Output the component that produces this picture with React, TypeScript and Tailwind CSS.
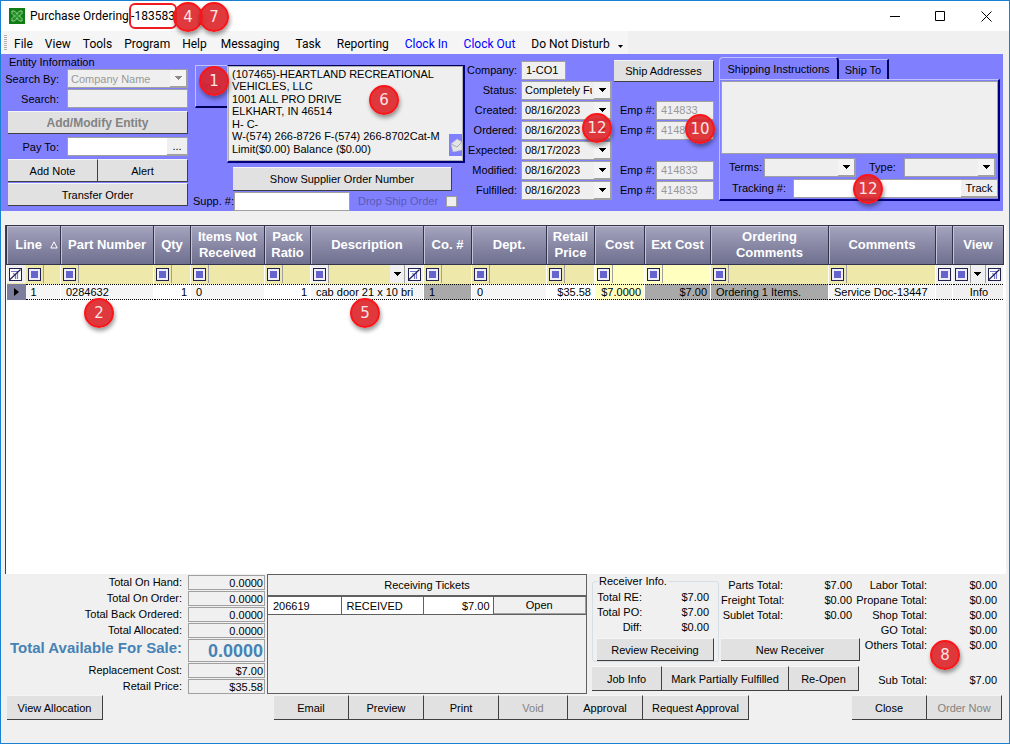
import { useId } from "react";
import type { ReactNode } from "react";
import clsx from "clsx";

const DATES = [
  { label: "Created:", value: "08/16/2023" },
  { label: "Ordered:", value: "08/16/2023" },
  { label: "Expected:", value: "08/17/2023" },
  { label: "Modified:", value: "08/16/2023" },
  { label: "Fulfilled:", value: "08/16/2023" },
];

const ADDRESS = [
  "(107465)-HEARTLAND RECREATIONAL",
  "VEHICLES, LLC",
  "1001 ALL PRO DRIVE",
  "ELKHART, IN 46514",
  "H- C-",
  "W-(574) 266-8726 F-(574) 266-8702Cat-M",
  "Limit($0.00) Balance ($0.00)",
];

const FIELD = "border border-[#a0a0a0] bg-[#efefef] outline-none";

interface BadgeProps {
  children: ReactNode;
  className: string;
}

function Badge({ children, className }: BadgeProps) {
  return (
    <span
      className={clsx(
        "pointer-events-none absolute z-10 flex h-[30px] w-[30px] items-center justify-center rounded-full border-2 border-[#fb1518] bg-[#dc2228]/90 font-['DejaVu_Sans'] text-[15px] text-[#fbe4e4] shadow-[1px_3px_4px_rgba(0,0,0,0.4)]",
        className,
      )}
    >
      {children}
    </span>
  );
}

interface ButtonProps {
  children: ReactNode;
  className?: string;
  disabled?: boolean;
}

function Button({ children, className, disabled }: ButtonProps) {
  return (
    <button
      type="button"
      disabled={disabled}
      className={clsx(
        "flex shrink-0 items-center justify-center border-t border-r border-b border-t-[#f4f4f4] border-r-[#404040] border-b-[#404040] bg-[#e1e1e1] whitespace-nowrap disabled:text-[#838383]",
        className,
      )}
    >
      {children}
    </button>
  );
}

function Arrow({ muted }: { muted?: boolean }) {
  return (
    <svg
      viewBox="0 0 7 4"
      className={clsx("h-1 w-[7px] shrink-0", muted ? "text-[#8a8a8a]" : "text-black")}
      fill="currentColor"
      shapeRendering="crispEdges"
    >
      <path d="M0 0h7v1H0zM1 1h5v1H1zM2 2h3v1H2zM3 3h1v1H3z" />
    </svg>
  );
}

interface SelectFieldProps {
  id?: string;
  value?: string;
  label?: string;
  className?: string;
  disabled?: boolean;
}

function SelectField({ id, value = "", label, className, disabled }: SelectFieldProps) {
  return (
    <span className={clsx("relative flex", className)}>
      <select
        id={id}
        aria-label={label}
        disabled={disabled}
        className={clsx(
          FIELD,
          "w-full appearance-none border-r-2 pr-[18px] pl-[3px] text-black disabled:text-[#999] disabled:opacity-100",
        )}
      >
        <option>{value}</option>
      </select>
      <span className="pointer-events-none absolute inset-y-px right-0.5 flex w-4 items-center justify-center border-b border-[#a0a0a0] bg-[#f4f4f4]">
        <Arrow muted={disabled} />
      </span>
    </span>
  );
}

function FilterIcon() {
  return (
    <span className="flex h-[13px] w-[13px] shrink-0 items-center justify-center border border-[#20204e] bg-[#eeeefa]">
      <span className="h-[7px] w-[7px] bg-[#6464cc]" />
    </span>
  );
}

function ClearFilterIcon() {
  return (
    <svg viewBox="0 0 13 13" className="h-[13px] w-[13px] shrink-0" fill="none">
      <rect x="0.5" y="0.5" width="12" height="12" fill="#fff" stroke="#20204e" />
      <path d="M2 3.500h8M4 5.500l2 1M6.500 7v4M8.500 5v6" stroke="#7474d4" strokeWidth="1.2" />
      <path d="M1 11.500 11.500 1.500" stroke="#20204e" strokeWidth="1.2" />
    </svg>
  );
}

function TitleBar() {
  return (
    <header className="relative flex h-[30px] items-center bg-white pl-2 font-[Roboto,sans-serif] text-[12px]">
      <svg viewBox="0 0 16 16" className="h-4 w-4" fill="none">
        <rect width="16" height="16" fill="#0f7d12" />
        <path d="M3 3h2.500L13 10.500V13h-2.500L3 5.500zM13 3h-2.500L3 10.500V13h2.500L13 5.500z" stroke="#9fd69f" />
        <path d="m4.500 4.500 7 7M11.500 4.500l-7 7" stroke="#2f9c33" strokeWidth="1.4" />
      </svg>
      <h1 className="ml-[5px] w-[99px] whitespace-nowrap">Purchase Ordering</h1>
      <span className="flex h-[26px] w-12 items-center justify-center rounded-md border-2 border-[#ee1c20] whitespace-nowrap">
        -183583
      </span>
      <Badge className="top-[1px] left-[172px]">4</Badge>
      <Badge className="top-[1px] left-[198px]">7</Badge>
      <div className="ml-auto flex">
        <button type="button" aria-label="Minimize" className="flex h-7 w-[45px] items-center justify-center">
          <svg viewBox="0 0 11 11" className="h-[11px] w-[11px]" stroke="#000" fill="none">
            <path d="M0 5.500h10" />
          </svg>
        </button>
        <button type="button" aria-label="Maximize" className="flex h-7 w-[45px] items-center justify-center">
          <svg viewBox="0 0 11 11" className="h-[11px] w-[11px]" stroke="#000" fill="none">
            <path d="M.5.5h9v9h-9z" />
          </svg>
        </button>
        <button type="button" aria-label="Close window" className="flex h-7 w-[46px] items-center justify-center">
          <svg viewBox="0 0 11 11" className="h-[11px] w-[11px]" stroke="#000" fill="none">
            <path d="m.5.5 10 10M10.500.5l-10 10" />
          </svg>
        </button>
      </div>
    </header>
  );
}

function MenuBar() {
  return (
    <nav className="flex h-[23px] items-center bg-[#f0f0f0] font-[Roboto,sans-serif] text-[12px] whitespace-nowrap">
      <div className="flex h-full w-[627px] items-center bg-[#f5f5f5] pl-[3px]">
        <span className="mr-[7px] h-4 w-[3px] shrink-0 bg-[repeating-linear-gradient(#b0b0b0_0_1px,transparent_1px_2px)]" />
        <div className="flex gap-3 pt-0.5">
          <button type="button">File</button>
          <button type="button">View</button>
          <button type="button">Tools</button>
          <button type="button">Program</button>
          <button type="button">Help</button>
        </div>
        <div className="ml-3.5 flex gap-4 pt-0.5">
          <button type="button">Messaging</button>
          <button type="button">Task</button>
          <button type="button">Reporting</button>
          <button type="button" className="text-[#0000ff]">Clock In</button>
          <button type="button" className="text-[#0000ff]">Clock Out</button>
          <button type="button">Do Not Disturb</button>
        </div>
        <span className="mt-2 ml-2">
          <svg viewBox="0 0 5 3" className="h-[3px] w-[5px]">
            <path d="M0 0h5L2.500 3z" />
          </svg>
        </span>
      </div>
    </nav>
  );
}

function EntityPanel() {
  return (
    <div className="flex w-[187px] shrink-0 flex-col pt-px pl-[7px]">
      <h2 className="h-[14px] pl-px leading-[14px]">Entity Information</h2>
      <div className="grid grid-cols-[51px_1fr] items-center gap-x-2 gap-y-px">
        <label htmlFor="search-by" className="-ml-2 text-right whitespace-nowrap">Search By:</label>
        <SelectField id="search-by" value="Company Name" disabled className="h-[19px]" />
        <label htmlFor="search" className="text-right">Search:</label>
        <input id="search" className={clsx(FIELD, "h-[19px] w-full")} />
      </div>
      <Button disabled className="mt-[3px] h-[23px] text-[12px] font-bold">Add/Modify Entity</Button>
      <div className="mt-[3px] grid grid-cols-[51px_1fr] items-center gap-x-2">
        <label htmlFor="pay-to" className="text-right">Pay To:</label>
        <span className="flex h-[19px] border border-[#a0a0a0] bg-white">
          <input id="pay-to" className="w-full min-w-0 bg-transparent outline-none" />
          <button type="button" aria-label="Browse payees" className="w-5 shrink-0 border-b border-[#a0a0a0] bg-[#efefef] leading-3">
            ...
          </button>
        </span>
      </div>
      <div className="mt-[3px] grid grid-cols-2">
        <Button className="h-[23px]">Add Note</Button>
        <Button className="h-[23px]">Alert</Button>
      </div>
      <Button className="mt-px h-[23px]">Transfer Order</Button>
    </div>
  );
}

function SupplierPanel() {
  return (
    <div className="relative ml-[7px] flex w-[270px] shrink-0 flex-col pt-[11px]">
      <div className="flex items-start">
        <button
          type="button"
          className="h-[43px] w-8 shrink-0 border-t border-b-2 border-l border-t-[#c0c0ff] border-b-[#00005a] border-l-[#c0c0ff] text-[#26267a]"
        >
          Info
        </button>
        <div className="min-w-0 flex-1 border-t border-r-2 border-b-2 border-l border-t-[#00005a] border-r-[#00007e] border-b-[#00007e] border-l-[#c0c0ff]">
          <div className="relative h-[95px] border border-[#b0b0b0] bg-[#efefef] pt-px pl-[3px] whitespace-nowrap">
            {ADDRESS.map((line) => (
              <p key={line} className="odd:leading-3 even:leading-[13px]">{line}</p>
            ))}
            <span className="absolute right-0 bottom-1 flex h-[22px] w-[13px] items-center bg-[#8080ff]">
              <svg viewBox="0 0 13 14" className="h-[14px] w-[13px]">
                <path d="M2 6 8 1l5 3v8L4 14z" fill="#e4e4e4" stroke="#b8b8c4" strokeWidth="0.7" />
                <path d="m2 6 6 3 5-5" fill="none" stroke="#a8a8b4" />
              </svg>
            </span>
          </div>
        </div>
      </div>
      <Button className="mt-1 ml-[38px] h-6 w-[219px]">Show Supplier Order Number</Button>
      <div className="flex h-5 items-center">
        <label htmlFor="supplier" className="-ml-0.5 w-[41px] whitespace-nowrap">Supp. #:</label>
        <input id="supplier" className="h-[19px] w-[116px] border border-[#a0a0a0] bg-white outline-none" />
        <label htmlFor="drop-ship" className="ml-2 whitespace-nowrap text-[#5a5ab4]">Drop Ship Order</label>
        <input
          id="drop-ship"
          type="checkbox"
          disabled
          className="ml-2 h-[11px] w-[11px] appearance-none border border-[#a0a0a0] bg-[#efefef]"
        />
      </div>
      <Badge className="top-[12px] left-[4px]">1</Badge>
      <Badge className="top-[31px] left-[174px]">6</Badge>
    </div>
  );
}

function DatesPanel() {
  const uid = useId();
  return (
    <div className="relative ml-0.5 flex shrink-0 gap-0.5 pt-1.5">
      <div className="grid w-[145px] auto-rows-[20px] grid-cols-[50px_91px] items-center gap-x-1">
        <label htmlFor="company" className="text-right">Company:</label>
        <input id="company" defaultValue="1-CO1" className={clsx(FIELD, "h-[19px] w-[45px] pl-1")} />
        <label htmlFor="status" className="text-right">Status:</label>
        <SelectField id="status" value="Completely Fulfilled" className="h-[19px]" />
        {DATES.map(({ label, value }) => (
          <div key={label} className="contents">
            <label htmlFor={uid + label} className="text-right">{label}</label>
            <SelectField id={uid + label} value={value} className="h-[19px]" />
          </div>
        ))}
      </div>
      <div className="w-[100px]">
        <Button className="h-[22px] w-full">Ship Addresses</Button>
        <div className="mt-[18px] grid auto-rows-[20px] grid-cols-[36px_58px] items-center pl-1.5">
          {DATES.map(({ label }) =>
            label === "Expected:" ? (
              <span key={label} className="col-span-2" />
            ) : (
              <div key={label} className="contents">
                <label htmlFor={uid + "emp" + label}>Emp #:</label>
                <input
                  id={uid + "emp" + label}
                  defaultValue="414833"
                  disabled
                  className={clsx(FIELD, "h-[19px] w-full pl-1 text-[#999]")}
                />
              </div>
            ),
          )}
        </div>
      </div>
      <Badge className="top-[59px] left-[115px]">12</Badge>
      <Badge className="top-[60px] left-[218px]">10</Badge>
    </div>
  );
}

function ShippingPanel() {
  return (
    <div className="relative mr-[3px] ml-[5px] min-w-0 flex-1 pt-[3px]">
      <div role="tablist" className="flex items-end">
        <button
          type="button"
          role="tab"
          aria-selected="true"
          className="h-[22px] w-[120px] rounded-t-sm border-t border-r-2 border-l border-t-[#c0c0ff] border-r-[#00005a] border-l-[#c0c0ff] whitespace-nowrap"
        >
          Shipping Instructions
        </button>
        <button
          type="button"
          role="tab"
          aria-selected="false"
          className="h-5 w-[50px] border-t border-r-2 border-t-[#c0c0ff] border-r-[#00005a]"
        >
          Ship To
        </button>
      </div>
      <div className="border-t border-r-2 border-b-2 border-l border-t-[#c0c0ff] border-r-[#00007e] border-b-[#00007e] border-l-[#c0c0ff] pb-px pl-px">
        <textarea
          aria-label="Shipping Instructions"
          className={clsx(FIELD, "mt-px block h-[73px] w-full resize-none")}
        />
        <div className="mt-[3px] flex h-5 items-center pr-0.5">
          <label htmlFor="terms" className="w-[43px] pl-2">Terms:</label>
          <SelectField id="terms" className="h-[19px] w-[92px]" />
          <label htmlFor="type" className="ml-[13px] w-[35px]">Type:</label>
          <SelectField id="type" className="h-[19px] flex-1" />
        </div>
        <div className="mt-px flex h-5 items-center">
          <label htmlFor="tracking" className="w-[72px] shrink-0 pl-[11px] whitespace-nowrap">Tracking #:</label>
          <span className="flex h-[19px] flex-1 border border-[#a0a0a0] bg-white">
            <input id="tracking" className="w-full min-w-0 bg-transparent outline-none" />
            <button type="button" className="w-9 shrink-0 border-b border-[#a0a0a0] bg-[#efefef]">Track</button>
          </span>
        </div>
      </div>
      <Badge className="top-[120px] left-[134px]">12</Badge>
    </div>
  );
}

interface Column {
  title: string;
  width: string;
  filter?: string;
  value: string;
  cell?: string;
  arrow?: boolean;
  clear?: boolean;
  sorted?: boolean;
}

const COLUMNS: Column[] = [
  { title: "Line", width: "w-[54px]", value: "1", sorted: true },
  { title: "Part Number", width: "w-[93px]", value: "0284632" },
  { title: "Qty", width: "w-[37px]", value: "1", cell: "text-right" },
  { title: "Items Not Received", width: "w-[74px]", value: "0" },
  { title: "Pack Ratio", width: "w-[46px]", value: "1", cell: "text-right" },
  { title: "Description", width: "w-[113px]", value: "cab door 21 x 10 bri", arrow: true, clear: true },
  { title: "Co. #", width: "w-[48px]", value: "1", cell: "bg-[#a9a9a9]" },
  { title: "Dept.", width: "w-[75px]", value: "0" },
  { title: "Retail Price", width: "w-[48px]", value: "$35.58", cell: "text-right" },
  { title: "Cost", width: "w-[50px]", value: "$7.0000", filter: "bg-[#ffffc0]", cell: "bg-[#ffffc0] text-right" },
  { title: "Ext Cost", width: "w-[66px]", value: "$7.00", filter: "bg-[#ffffc0]", cell: "bg-[#a9a9a9] text-right" },
  { title: "Ordering Comments", width: "w-[118px]", value: "Ordering 1 Items.", cell: "bg-[#a9a9a9]" },
  { title: "Comments", width: "w-auto", value: "Service Doc-13447" },
  { title: "", width: "w-[17px]", value: "", filter: "bg-[#f0f0f0]", cell: "bg-[#f0f0f0]" },
  { title: "View", width: "w-[51px]", value: "Info", filter: "bg-[#f0f0f0]", cell: "bg-[#f0f0f0] text-center", arrow: true, clear: true },
];

function OrderGrid() {
  return (
    <main className="relative mt-[14px] mr-[3px] ml-1 flex-1 border-l border-[#404040] bg-white pr-0.5">
      <table className="w-full table-fixed border-collapse">
        <colgroup>
          {COLUMNS.map((col) => (
            <col key={col.title} className={col.width} />
          ))}
        </colgroup>
        <thead>
          <tr className="h-[39px]">
            {COLUMNS.map((col) => (
              <th
                key={col.title}
                scope="col"
                className="border border-[#33334a] bg-linear-to-b from-[#a4a4be] to-[#6e6e8e] p-0 text-[13px] leading-4 font-bold text-white shadow-[inset_1px_1px_0_#c4c4d6]"
              >
                {col.sorted ? (
                  <span className="flex items-center justify-end gap-2 pr-0.5">
                    {col.title}
                    <svg viewBox="0 0 8 8" className="h-2 w-2" fill="none" stroke="#fff">
                      <path d="M4 .8.800 7h6.400z" />
                    </svg>
                  </span>
                ) : (
                  col.title
                )}
              </th>
            ))}
          </tr>
        </thead>
        <tbody>
          <tr className="h-[19px]">
            {COLUMNS.map((col) => (
              <td key={col.title} className={clsx("border-r border-white p-0", col.filter ?? "bg-[#eee8aa]")}>
                <div className="flex h-[18px] items-center">
                  {col.sorted && (
                    <span className="flex h-full w-[19px] shrink-0 items-center bg-[#f0f0f0] pl-0.5">
                      <ClearFilterIcon />
                    </span>
                  )}
                  <span
                    className={clsx(
                      "flex h-full shrink-0 items-center justify-center",
                      col.title ? "w-[18px] border-r border-[#a0a0a0]" : "w-4",
                      col.arrow && "bg-[#f0f0f0]",
                    )}
                  >
                    <FilterIcon />
                  </span>
                  {col.arrow && (
                    <span className="ml-auto flex h-full w-[15px] items-center justify-center border-r border-[#a0a0a0] bg-[#f0f0f0]">
                      <Arrow />
                    </span>
                  )}
                  {col.clear && (
                    <span className="flex h-full w-[18px] items-center justify-center bg-[#f0f0f0]">
                      <ClearFilterIcon />
                    </span>
                  )}
                </div>
              </td>
            ))}
          </tr>
          <tr className="h-4">
            {COLUMNS.map((col) => (
              <td key={col.title} className={clsx("border-r border-white p-0 leading-3 whitespace-nowrap", col.cell ?? "bg-[#f5f5f5]")}>
                <div className="flex h-4">
                  {col.sorted && (
                    <span className="flex w-[19px] shrink-0 items-center justify-center bg-[#7c7c9c]">
                      <svg viewBox="0 0 5 8" className="h-2 w-[5px]">
                        <path d="M0 0v8l5-4z" />
                      </svg>
                    </span>
                  )}
                  <span className="h-4 flex-1 overflow-hidden border-y border-dotted border-black pr-[3px] pl-[5px] leading-[14px]">
                    {col.title === "View" ? <button type="button">{col.value}</button> : col.value}
                  </span>
                </div>
              </td>
            ))}
          </tr>
        </tbody>
      </table>
      <Badge className="top-[73px] left-[78px]">2</Badge>
      <Badge className="top-[73px] left-[344px]">5</Badge>
    </main>
  );
}

const STOCK = [
  ["Total On Hand:", "0.0000"],
  ["Total On Order:", "0.0000"],
  ["Total Back Ordered:", "0.0000"],
  ["Total Allocated:", "0.0000"],
  ["Total Available For Sale:", "0.0000"],
  ["Replacement Cost:", "$7.00"],
  ["Retail Price:", "$35.58"],
];

function StockTotals() {
  return (
    <dl className="w-[260px] shrink-0 pt-px">
      {STOCK.map(([label, value]) => {
        const big = label.includes("Available");
        return (
          <div key={label} className={clsx("flex", big ? "h-6 font-bold text-[#4682b4]" : "h-4")}>
            <dt className={clsx("w-[183px] shrink-0 pr-1.5 text-right whitespace-nowrap", big ? "text-[15px] leading-[18px]" : "leading-[14px]")}>
              {label}
            </dt>
            <dd
              className={clsx(
                "flex-1 border border-[#a0a0a0] pr-px text-right",
                big ? "h-[23px] text-[18px] leading-[22px]" : "h-[15px] leading-[14px]",
              )}
            >
              {value}
            </dd>
          </div>
        );
      })}
    </dl>
  );
}

function Tickets() {
  return (
    <section className="ml-0.5 h-[120px] w-[320px] shrink-0 border border-[#606060]">
      <table className="w-full table-fixed border-collapse">
        <caption className="h-5 leading-5">Receiving Tickets</caption>
        <tbody>
          <tr className="h-[18px] border-t-2 border-b border-[#606060]">
            <td className="w-[73px] border-r border-[#606060] bg-white p-0 pl-[5px]">206619</td>
            <td className="w-[82px] border-r border-[#606060] bg-white p-0 pl-[5px]">RECEIVED</td>
            <td className="w-[70px] border-r border-[#606060] bg-white p-0 pr-[3px] text-right">$7.00</td>
            <td className="p-0">
              <button type="button" className="block h-[17px] w-full border-r border-b border-[#a0a0a0]">Open</button>
            </td>
          </tr>
        </tbody>
      </table>
    </section>
  );
}

interface AmountsProps {
  rows: string[][];
  className: string;
}

function Amounts({ rows, className }: AmountsProps) {
  return (
    <dl className={clsx("grid auto-rows-[15px] items-center text-right whitespace-nowrap", className)}>
      {rows.map(([label, value]) => (
        <div key={label} className="contents">
          <dt>{label}</dt>
          <dd>{value}</dd>
        </div>
      ))}
    </dl>
  );
}

function Footer() {
  return (
    <footer className="relative pl-1">
      <div className="flex">
        <StockTotals />
        <Tickets />
        {/* the button rows reach 4px past this column, under the totals beside it */}
        <div className="ml-[5px] w-[264px] shrink-0">
          <div className="flex">
            <fieldset className="h-[88px] w-[126px] shrink-0 rounded-[3px] border border-[#d5dfe5] px-1">
              <legend className="ml-px px-px leading-[14px]">Receiver Info.</legend>
              <Amounts
                className="grid-cols-[45px_1fr] pt-px pr-[5px]"
                rows={[["Total RE:", "$7.00"], ["Total PO:", "$7.00"], ["Diff:", "$0.00"]]}
              />
              <Button className="mt-1 h-[23px] w-[117px]">Review Receiving</Button>
            </fieldset>
            <div className="ml-0.5 w-[139px] shrink-0">
              <Amounts
                className="grid-cols-[62px_1fr] pt-[3px] pr-2"
                rows={[["Parts Total:", "$7.00"], ["Freight Total:", "$0.00"], ["Sublet Total:", "$0.00"]]}
              />
              <Button className="mt-4 h-[23px] w-full">New Receiver</Button>
            </div>
          </div>
          <div className="mt-1 flex">
            <Button className="h-[25px] w-[70px]">Job Info</Button>
            <Button className="h-[25px] w-[127px]">Mark Partially Fulfilled</Button>
            <Button className="h-[25px] w-[70px]">Re-Open</Button>
          </div>
        </div>
        <div className="ml-auto pr-3">
          <Amounts
            className="grid-cols-[71px_70px] pt-[3px]"
            rows={[
              ["Labor Total:", "$0.00"],
              ["Propane Total:", "$0.00"],
              ["Shop Total:", "$0.00"],
              ["GO Total:", "$0.00"],
              ["Others Total:", "$0.00"],
            ]}
          />
          <Amounts className="mt-5 grid-cols-[71px_70px]" rows={[["Sub Total:", "$7.00"]]} />
        </div>
      </div>
      <div className="flex pr-[7px] pb-[23px] pl-0.5">
        <Button className="h-[25px] w-24">View Allocation</Button>
        <div className="ml-[171px] flex">
          <Button className="h-[25px] w-[75px]">Email</Button>
          <Button className="h-[25px] w-[75px]">Preview</Button>
          <Button className="h-[25px] w-[75px]">Print</Button>
          <Button disabled className="h-[25px] w-[69px]">Void</Button>
          <Button className="h-[25px] w-[75px]">Approval</Button>
          <Button className="h-[25px] w-[106px]">Request Approval</Button>
        </div>
        <div className="ml-auto flex">
          <Button className="h-[25px] w-[75px]">Close</Button>
          <Button disabled className="h-[25px] w-[75px]">Order Now</Button>
        </div>
      </div>
      <Badge className="top-[66px] right-[49px]">8</Badge>
    </footer>
  );
}

export default function App() {
  return (
    <div className="flex min-h-screen flex-col border border-[#1a80d2] bg-[#f0f0f0] font-['Liberation_Sans',Arial,sans-serif] text-[11px] leading-[14px] text-black">
      <TitleBar />
      <MenuBar />
      <section className="mr-1.5 flex h-[157px] bg-[#8080ff]">
        <EntityPanel />
        <SupplierPanel />
        <DatesPanel />
        <ShippingPanel />
      </section>
      <OrderGrid />
      <Footer />
    </div>
  );
}
